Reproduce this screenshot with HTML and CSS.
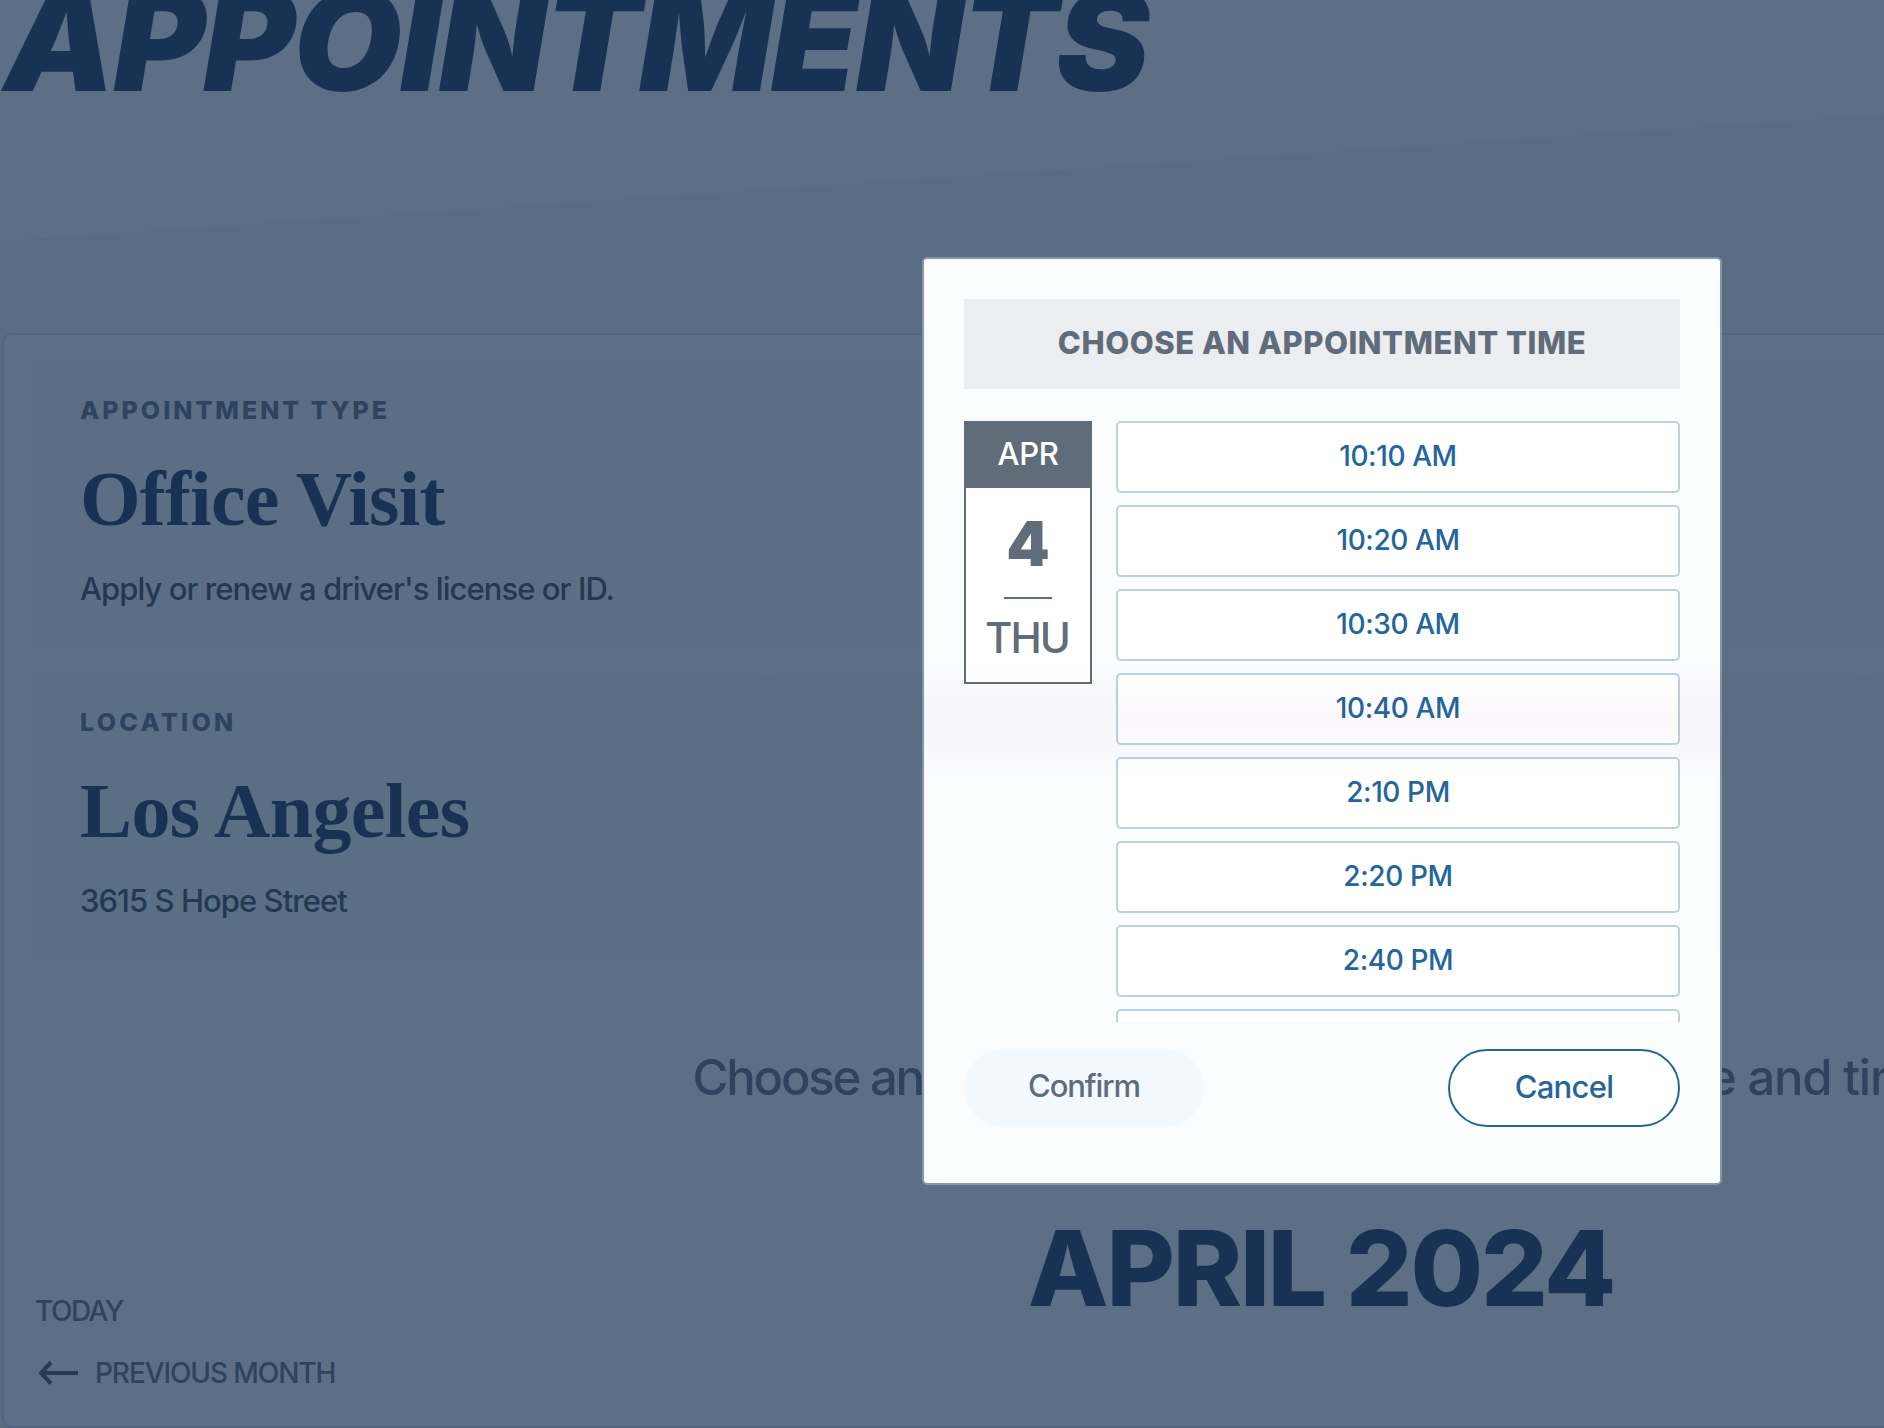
FILE: index.html
```html
<!DOCTYPE html>
<html lang="en">
<head>
<meta charset="utf-8">
<title>Appointments</title>
<link rel="stylesheet" href="styles.css">
</head>
<body>
<div class="page">
  <header class="hero"><h1 class="hero-title">APPOINTMENTS</h1></header>
  <main class="panel">
    <section class="summary summary-type">
      <h3 class="label label-type">APPOINTMENT TYPE</h3>
      <p class="value value-type">Office Visit</p>
      <p class="detail detail-type">Apply or renew a driver's license or ID.</p>
    </section>
    <section class="summary summary-location">
      <h3 class="label label-location">LOCATION</h3>
      <p class="value value-location">Los Angeles</p>
      <p class="detail detail-location">3615 S Hope Street</p>
    </section>
    <p class="prompt"><span class="prompt-start">Choose an</span><span>available appointment</span><span>date and time.</span></p>
    <h2 class="month">APRIL 2024</h2>
    <nav class="month-nav">
      <a class="today">TODAY</a>
      <a class="previous"><svg class="arrow" viewBox="0 0 40 24"><path d="M39 12H2M12 1.500 2 12l10 10.500"/></svg><span>PREVIOUS MONTH</span></a>
    </nav>
  </main>
</div>
<div class="modal" role="dialog">
  <h2 class="modal-title"><span>CHOOSE AN APPOINTMENT TIME</span></h2>
  <div class="picker">
    <div class="date">
      <div class="date-month">APR</div>
      <div class="date-day">4</div>
      <div class="date-rule"></div>
      <div class="date-weekday">THU</div>
    </div>
    <div class="slots">
      <button class="slot">10:10 AM</button>
      <button class="slot">10:20 AM</button>
      <button class="slot">10:30 AM</button>
      <button class="slot">10:40 AM</button>
      <button class="slot">2:10 PM</button>
      <button class="slot">2:20 PM</button>
      <button class="slot">2:40 PM</button>
      <button class="slot"></button>
    </div>
  </div>
  <div class="actions">
    <button class="button confirm">Confirm</button>
    <button class="button cancel">Cancel</button>
  </div>
</div>
<div class="haze"></div>
</body>
</html>
```

FILE: styles.css
```css
* { box-sizing: border-box; margin: 0; padding: 0; }
body {
  width: 1884px; height: 1428px; overflow: hidden; position: relative;
  background: #586d82; color: #2d435f;
  font-family: Inter, "Liberation Sans", sans-serif; font-weight: 450;
}
.page { width: 1884px; height: 1428px; overflow: hidden; }
.hero { height: 333px; position: relative; }
.hero::before {
  content: ""; position: absolute; inset: 0; z-index: -1; background: #5d6f86;
  clip-path: polygon(0 0, 100% 0, 100% 115px, 0 241px);
}
.hero-title {
  font-size: 140px; line-height: 80px; font-weight: 900; font-style: italic;
  padding-left: 4px; letter-spacing: -1.9px; color: #193153; white-space: nowrap;
}
.panel {
  width: 2640px; height: 1095px; margin-left: 2px; padding: 27px 30px 0;
  border: 2px solid #526581; border-radius: 10px; background: #5d6f86;
}
.summary { height: 284px; padding: 33px 46px 0; margin-bottom: 28px; }
.summary-type { background: #5c6e86; }
.summary-location { background: #5a6f84; }
.label { font-size: 25px; line-height: 30px; font-weight: 800; letter-spacing: 3px; }
.label-location { letter-spacing: 3.3px; }
.value {
  font-family: "Liberation Serif", serif; font-weight: 700; font-size: 78px; line-height: 80px;
  margin-top: 34px; color: #193153; white-space: nowrap; letter-spacing: -.65px;
}
.value-type { letter-spacing: -.85px; }
.detail { font-size: 31px; line-height: 40px; margin-top: 30px; color: #233852; letter-spacing: -.95px; }
.prompt {
  display: flex; justify-content: space-between; width: 1263px; margin: 90px auto 0; padding-left: 2px;
  font-size: 49px; line-height: 60px; white-space: nowrap; letter-spacing: -1.2px;
}
.prompt-start { letter-spacing: -2.2px; }
.month {
  font-size: 105px; line-height: 120px; font-weight: 800; text-align: center;
  margin-top: 100px; color: #193153; letter-spacing: -2.2px; text-indent: -2px;
}
.month-nav {
  font-size: 28px; line-height: 34px; display: flex; flex-direction: column; gap: 28px;
  margin-top: -34px; padding-left: 1px; letter-spacing: -1.1px;
}
.today { letter-spacing: -1.5px; }
.previous { display: flex; align-items: center; }
.arrow { width: 40px; height: 24px; margin: 0 16px 0 4px; fill: none; stroke: #263a52; stroke-width: 4; }

.modal {
  position: absolute; left: 922px; top: 257px; width: 800px; height: 928px;
  padding: 40px; border: 2px solid #8795aa; border-radius: 5px; background: #fbfcfe; color: #616c7a;
}
.modal-title {
  height: 90px; background: #ebedf0; font-size: 31px; line-height: 87px; font-weight: 800;
  letter-spacing: .55px; text-align: center;
}
.picker { display: flex; gap: 24px; margin-top: 32px; height: 601px; overflow: hidden; align-items: flex-start; }
.date { width: 128px; height: 263px; border: 2px solid #616c7a; background: #fff; text-align: center; }
.date-month { height: 65px; background: #616c7a; color: #fff; font-size: 31px; line-height: 61px; letter-spacing: -.3px; }
.date-day { font-size: 62px; line-height: 64px; font-weight: 900; margin-top: 24px; }
.date-rule { width: 48px; height: 2px; background: #616c7a; margin: 21px auto 0; }
.date-weekday { font-size: 42px; line-height: 50px; margin-top: 14px; letter-spacing: -2px; text-indent: -2px; }
.slots { flex: 1; display: flex; flex-direction: column; gap: 12px; }
.slot {
  flex: none; height: 72px; padding-bottom: 2px; border: 2px solid #bfd0e1; border-radius: 5px;
  background: #fff; color: #24659c; font: 450 28px/66px Inter, sans-serif; letter-spacing: -.4px;
}
.actions { display: flex; justify-content: space-between; margin-top: 27px; }
.button { height: 78px; border-radius: 39px; font: 450 31px/72px Inter, sans-serif; padding-bottom: 4px; }
.confirm { width: 240px; border: 0; background: #f2f9ff; color: #616c7a; letter-spacing: -1.1px; }
.cancel { width: 232px; border: 2px solid #24659c; background: #fff; color: #24659c; letter-spacing: -.7px; }
.haze {
  position: absolute; left: 755px; top: 690px; width: 1125px; height: 62px; border-radius: 31px;
  background: rgba(100, 40, 130, .028); filter: blur(14px); pointer-events: none;
}
```
